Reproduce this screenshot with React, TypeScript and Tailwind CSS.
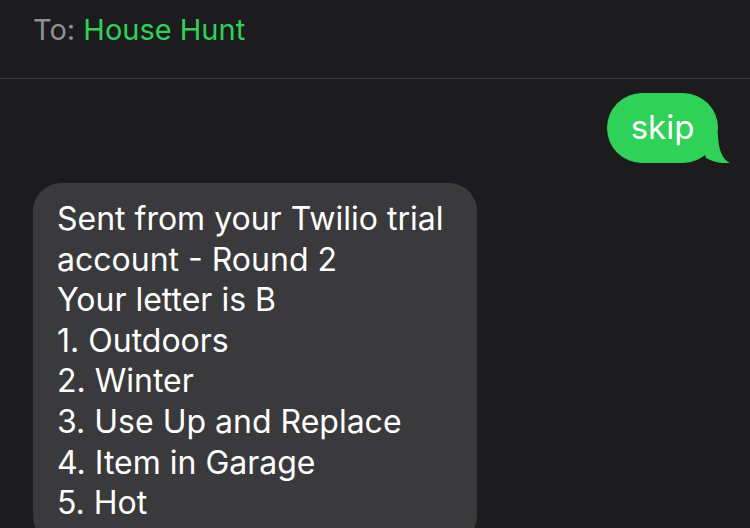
export default function App() {
  const lines = [
    "Sent from your Twilio trial",
    "account - Round 2",
    "Your letter is B",
    "1. Outdoors",
    "2. Winter",
    "3. Use Up and Replace",
    "4. Item in Garage",
    "5. Hot",
  ];
  return (
    <div
      className="w-[750px] h-[528px] overflow-hidden bg-[#1c1c1e] text-white"
      style={{ fontFamily: "Inter, 'Noto Sans', sans-serif" }}
    >
      <div className="h-[79px] border-b border-[#38383a] pl-[33px] pt-[12px]">
        <p className="text-[29px] leading-[36px]">
          <span className="text-[#8e8e93]">To: </span>
          <span className="text-[#30d158]">House Hunt</span>
        </p>
      </div>

      <div className="flex flex-col pl-[33px] pr-[32px] pt-[14px]">
        <div className="flex justify-end">
          <div className="relative">
            <svg
              className="absolute right-[-12px] bottom-0"
              width="30"
              height="30"
              viewBox="0 0 30 30"
            >
              <path
                d="M18 0 C18 16 22 26 30 30 C22 31 13 29 6 25 L4 18 Z"
                fill="#30d158"
              />
            </svg>
            <div className="relative h-[70px] w-[111px] rounded-[35px] bg-[#30d158] flex items-center justify-center">
              <span className="text-[33px] leading-none pb-[2px]">skip</span>
            </div>
          </div>
        </div>

        <div className="mt-[20px] w-[444px] rounded-[28px] bg-[#3a3a3c] pl-[24px] pr-[20px] pt-[16px] pb-[20px]">
          {lines.map((l) => (
            <p key={l} className="text-[32px] leading-[40.6px]">
              {l}
            </p>
          ))}
        </div>
      </div>
    </div>
  );
}
